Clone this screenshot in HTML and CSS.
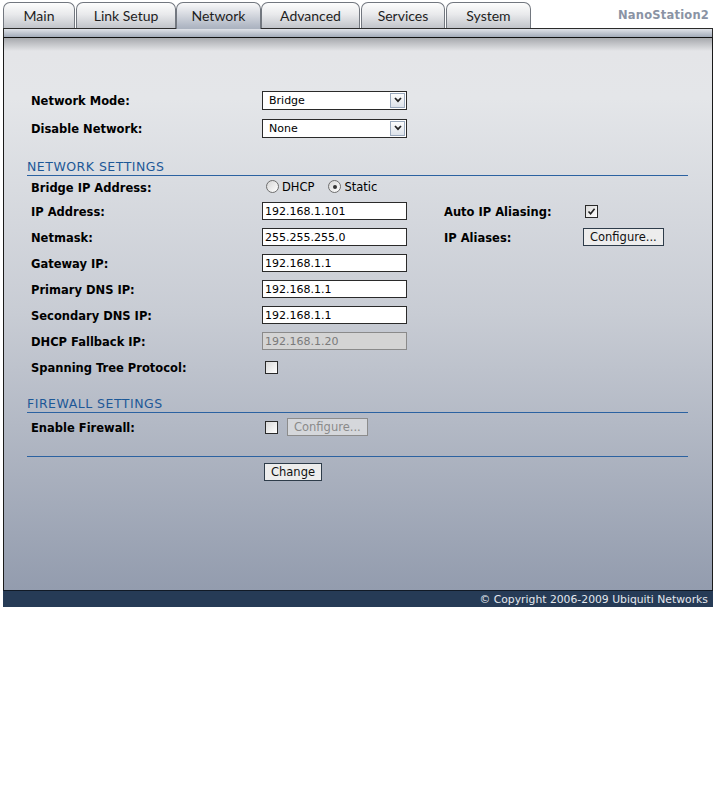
FILE: index.html
```html
<!DOCTYPE html>
<html lang="en">
<head>
  <meta charset="UTF-8">
  <title>Network</title>
  <link rel="stylesheet" href="styles.css">
</head>
<body>
  <div class="page">
    <div class="top">
      <ul class="tabs">
        <li>Main</li>
        <li>Link Setup</li>
        <li class="active">Network</li>
        <li>Advanced</li>
        <li>Services</li>
        <li>System</li>
      </ul>
      <div class="brand">NanoStation2</div>
    </div>
    <div class="strip"></div>

    <div class="panel">
      <div class="row tall">
        <span class="label">Network Mode:</span>
        <span class="select">
          <select><option>Bridge</option><option>Router</option></select>
          <span class="arrow"><svg width="8" height="6" viewBox="0 0 8 6"><path d="M1 1 L4 4.2 L7 1" fill="none" stroke="#222" stroke-width="1.7"/></svg></span>
        </span>
      </div>
      <div class="row tall">
        <span class="label">Disable Network:</span>
        <span class="select">
          <select><option>None</option></select>
          <span class="arrow"><svg width="8" height="6" viewBox="0 0 8 6"><path d="M1 1 L4 4.2 L7 1" fill="none" stroke="#222" stroke-width="1.7"/></svg></span>
        </span>
      </div>

      <div class="section">NETWORK SETTINGS</div>
      <div class="row short">
        <span class="label">Bridge IP Address:</span>
        <span class="radios">
          <label class="radio"><span class="circle"></span>DHCP</label>
          <label class="radio on"><span class="circle"></span>Static</label>
        </span>
      </div>
      <div class="row">
        <span class="label">IP Address:</span>
        <input class="text" type="text" value="192.168.1.101">
        <span class="label">Auto IP Aliasing:</span>
        <span class="check on"><svg width="11" height="11" viewBox="0 0 11 11"><path d="M2.5 5.5 L4.6 7.8 L8.6 2.8" fill="none" stroke="#222" stroke-width="1.6"/></svg></span>
      </div>
      <div class="row">
        <span class="label">Netmask:</span>
        <input class="text" type="text" value="255.255.255.0">
        <span class="label">IP Aliases:</span>
        <span><button class="btn">Configure...</button></span>
      </div>
      <div class="row">
        <span class="label">Gateway IP:</span>
        <input class="text" type="text" value="192.168.1.1">
      </div>
      <div class="row">
        <span class="label">Primary DNS IP:</span>
        <input class="text" type="text" value="192.168.1.1">
      </div>
      <div class="row">
        <span class="label">Secondary DNS IP:</span>
        <input class="text" type="text" value="192.168.1.1">
      </div>
      <div class="row">
        <span class="label">DHCP Fallback IP:</span>
        <input class="text" type="text" value="192.168.1.20" disabled>
      </div>
      <div class="row">
        <span class="label">Spanning Tree Protocol:</span>
        <span><span class="check"></span></span>
      </div>

      <div class="section second">FIREWALL SETTINGS</div>
      <div class="row tall">
        <span class="label">Enable Firewall:</span>
        <span class="inline">
          <span class="check"></span>
          <button class="btn" disabled>Configure...</button>
        </span>
      </div>

      <div class="divider"></div>
      <div class="row submit">
        <span></span>
        <span><button class="btn change">Change</button></span>
      </div>
    </div>

    <div class="footer">&copy; Copyright 2006-2009 Ubiquiti Networks</div>
  </div>
</body>
</html>
```

FILE: styles.css
```css
body {
  margin: 0;
  background: #fff;
  font-family: "DejaVu Sans", Verdana, sans-serif;
  font-size: 11px;
  color: #000;
}

.page {
  width: 710px;
  margin-left: 3px;
}

/* tabs */
.top {
  display: flex;
  align-items: flex-end;
  height: 28px;
}

.tabs {
  display: flex;
  align-items: flex-end;
  height: 100%;
  margin: 0;
  padding: 0;
  list-style: none;
}

.tabs li {
  height: 26px;
  box-sizing: border-box;
  padding-top: 1px;
  border: 1px solid #72777f;
  border-bottom: 0;
  border-radius: 7px 7px 0 0;
  background: linear-gradient(#fdfdfd, #e9eaec 45%, #c1c4ca);
  font: 14px Lato, "DejaVu Sans", sans-serif;
  line-height: 24px;
  color: #1e1e1e;
  text-align: center;
}

.tabs li:nth-child(1) { width: 72px; }
.tabs li:nth-child(2) { width: 100px; margin-left: 1px; }
.tabs li:nth-child(3) { width: 85px; }
.tabs li:nth-child(4) { width: 99px; }
.tabs li:nth-child(5) { width: 84px; margin-left: 1px; }
.tabs li:nth-child(6) { width: 85px; margin-left: 1px; }

.tabs li.active {
  height: 27px;
  margin-bottom: -1px;
  position: relative;
  z-index: 1;
  background: linear-gradient(#f9f9fa, #d9dce2 40%, #b4bbc7 85%, #aab2bf);
}

.brand {
  margin-left: auto;
  padding: 0 4px 6px 0;
  font-weight: bold;
  font-size: 11.5px;
  letter-spacing: 0.2px;
  color: #8a93a4;
}

.strip {
  height: 8px;
  border: 1px solid #2b2b2b;
  border-bottom-color: #111;
  background: linear-gradient(#dfe2e8, #a2abb9);
}

/* content */
.panel {
  height: 552px;
  box-sizing: border-box;
  padding: 48px 24px 0 23px;
  border-left: 1px solid #1a1a1a;
  border-right: 1px solid #1a1a1a;
  background: linear-gradient(#a7a9ad 0, #e4e5e8 13px, #e4e6e9 60px, #c8ccd4 50%, #939cae 100%);
}

.row {
  display: grid;
  grid-template-columns: 231px 182px 139px auto;
  align-items: center;
  height: 26px;
  padding-left: 4px;
}

.row.tall { height: 28px; }
.row.short { height: 22px; }

.label {
  padding-top: 2px;
  font-weight: bold;
  font-size: 11.5px;
}

.section {
  margin-top: 16px;
  padding: 1px 0 0;
  height: 16px;
  border-bottom: 1px solid #2b62a1;
  font-size: 12.5px;
  letter-spacing: 0.5px;
  line-height: 16px;
  color: #1d5897;
}

.section.second { margin-top: 15px; }

.divider {
  margin-top: 15px;
  border-top: 1px solid #2b62a1;
}

.submit {
  height: auto;
  padding-top: 6px;
}

/* controls */
.select {
  position: relative;
  display: inline-block;
  width: 145px;
  height: 19px;
}

.select select {
  appearance: none;
  -webkit-appearance: none;
  width: 100%;
  height: 100%;
  margin: 0;
  padding: 0 0 0 6px;
  border: 1px solid #2a2a2a;
  border-radius: 0;
  background: #fff;
  font: 11px "DejaVu Sans", Verdana, sans-serif;
  color: #000;
}

.arrow {
  position: absolute;
  right: 2px;
  top: 2px;
  width: 15px;
  height: 15px;
  box-sizing: border-box;
  border: 1px solid #9aa9bd;
  background: linear-gradient(#fdfdfd, #dce2ea);
  display: flex;
  align-items: center;
  justify-content: center;
  pointer-events: none;
}

.text {
  width: 145px;
  height: 18px;
  box-sizing: border-box;
  margin: 0;
  padding: 0 2px;
  border: 1px solid #2a2a2a;
  background: #fff;
  font: 11px "DejaVu Sans", Verdana, sans-serif;
  color: #000;
}

.text:disabled {
  border-color: #8a8a8a;
  background: #d4d4d4;
  color: #7a7a7a;
}

.radios {
  display: flex;
  align-items: center;
  gap: 14px;
  padding-left: 4px;
  padding-bottom: 1px;
  font-size: 11.5px;
}

.radio {
  display: flex;
  align-items: center;
  gap: 3px;
}

.circle {
  width: 13px;
  height: 13px;
  box-sizing: border-box;
  border: 1px solid #6e6e6e;
  border-radius: 50%;
  background: linear-gradient(135deg, #d6d6d6, #fff);
  display: flex;
  align-items: center;
  justify-content: center;
}

.radio.on .circle::after {
  content: "";
  width: 4px;
  height: 4px;
  border-radius: 50%;
  background: #333;
}

.check {
  display: inline-flex;
  align-items: center;
  justify-content: center;
  width: 13px;
  height: 13px;
  box-sizing: border-box;
  margin-left: 3px;
  border: 1px solid #2a2a2a;
  background: linear-gradient(135deg, #d9d9d9, #fff);
  vertical-align: middle;
}

.check.on {
  margin-left: 2px;
}

.inline {
  display: flex;
  align-items: center;
  gap: 9px;
}

.btn {
  height: 18px;
  margin: 0;
  padding: 0 6px;
  border: 1px solid #2e3c4a;
  border-radius: 0;
  background: #ededed;
  font: 11.5px "DejaVu Sans", Verdana, sans-serif;
  color: #111;
}

.btn:disabled {
  border-color: #8c8c8c;
  background: #d5d7db;
  color: #8a8a8a;
}

.btn.change {
  margin-left: 2px;
}

.footer {
  height: 16px;
  border-top: 1px solid #111a26;
  background: #263b56;
  box-shadow: 0 2px 0 #8c8c8c;
  padding-right: 5px;
  font-size: 10.8px;
  line-height: 17px;
  color: #e4e8ee;
  text-align: right;
}
```
